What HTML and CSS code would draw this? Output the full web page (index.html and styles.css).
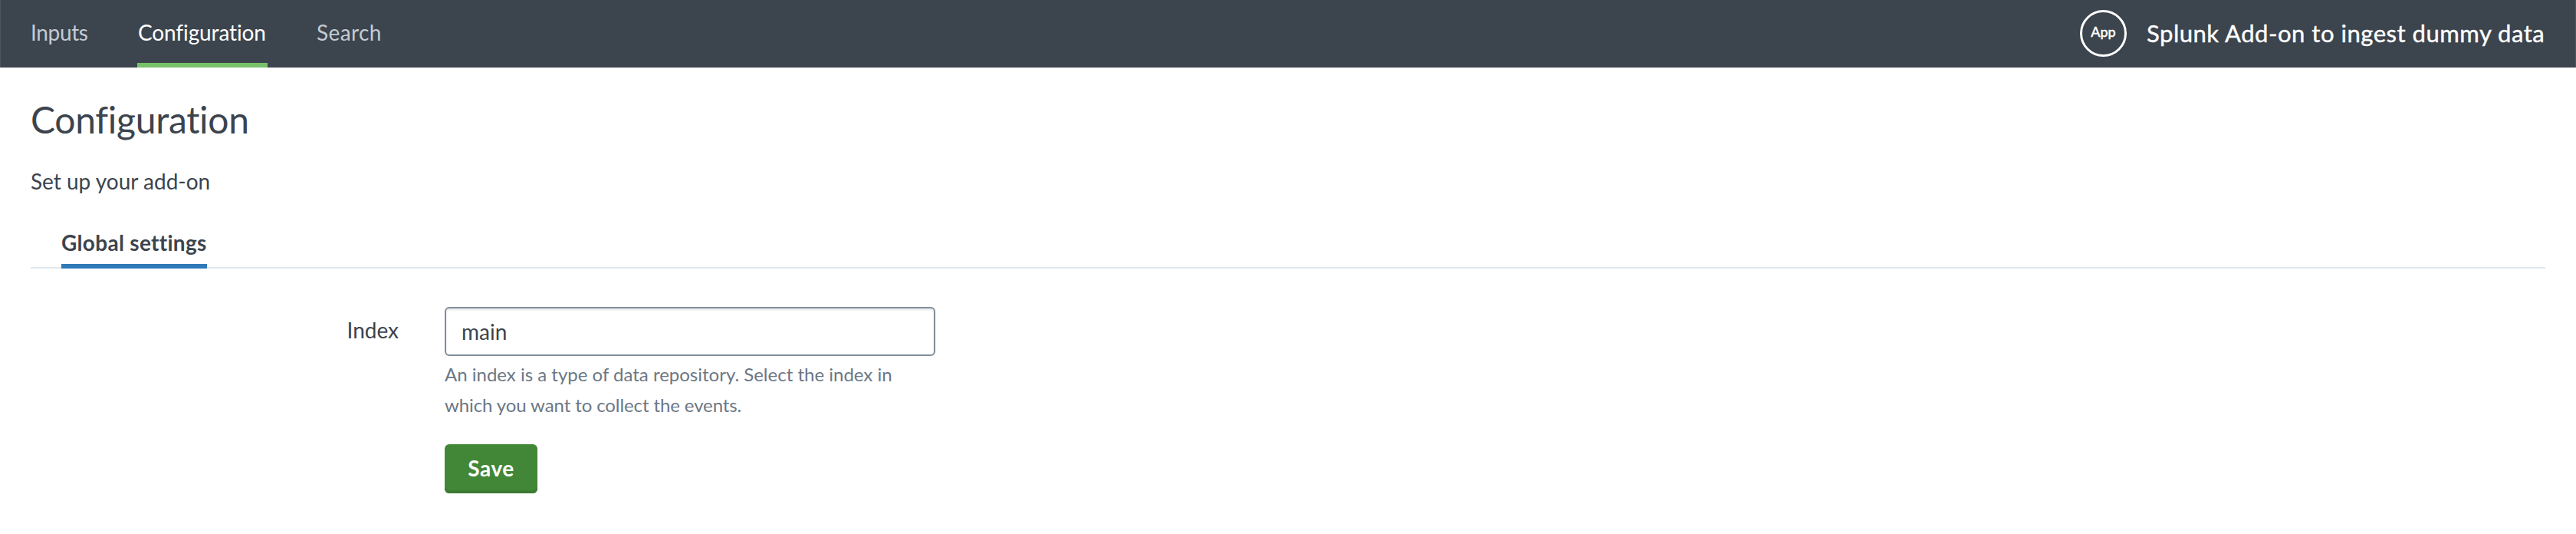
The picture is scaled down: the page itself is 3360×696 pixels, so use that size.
FILE: index.html
```html
<!DOCTYPE html>
<html lang="en">
<head>
<meta charset="utf-8">
<title>Configuration</title>
<link rel="stylesheet" href="styles.css">
</head>
<body>
<header class="app-bar">
  <nav class="nav">
    <a class="nav-item"><span class="t-inputs">Inputs</span></a>
    <a class="nav-item nav-active"><span class="t-config">Configuration</span></a>
    <a class="nav-item"><span class="t-search">Search</span></a>
  </nav>
  <div class="brand">
    <div class="app-icon"><span>App</span></div>
    <span class="app-name">Splunk Add-on to ingest dummy data</span>
  </div>
</header>
<main class="page">
  <h1 class="title">Configuration</h1>
  <p class="subtitle">Set up your add-on</p>
  <div class="tabs"><a class="tab"><span>Global settings</span></a></div>
  <form class="form">
    <label class="label" for="index">Index</label>
    <div class="control">
      <input class="field" id="index" type="text" value="main">
      <p class="help"><span class="help-first">An index is a type of data repository. Select the index in</span><br><span class="help-second">which you want to collect the events.</span></p>
      <button class="save" type="button">Save</button>
    </div>
  </form>
</main>
</body>
</html>
```
FILE: styles.css
```css
* { box-sizing: border-box; }
body {
  margin: 0;
  background: #fff;
  color: #3c444d;
  font: 28px/40px Lato, "Open Sans", sans-serif;
  font-kerning: normal;
  font-variant-ligatures: none;
}
.app-bar {
  display: flex;
  justify-content: space-between;
  height: 88px;
  padding: 0 40px 0 39px;
  background: #3c444d;
  border-left: 1px solid #4d555e;
  border-right: 1px solid #4d555e;
}
.nav { display: flex; }
.nav-item {
  height: 88px;
  padding-top: 22px;
  color: #c3cbd4;
  white-space: nowrap;
}
.nav-item:first-child { width: 139px; }
.nav-active {
  width: 170px;
  margin-right: 64px;
  padding-left: 1px;
  border-bottom: 6px solid #77c16a;
  color: #fff;
}
.t-inputs { letter-spacing: -0.35px; }
.t-config { letter-spacing: -0.12px; }
.t-search { letter-spacing: 0.4px; }
.brand { display: flex; align-items: center; height: 86px; }
.app-icon {
  display: flex;
  align-items: center;
  justify-content: center;
  width: 61px;
  height: 61px;
  margin-right: 26px;
  border: 3px solid #fff;
  border-radius: 50%;
  color: #fff;
  font-size: 18px;
  line-height: 24px;
  -webkit-text-stroke: 0.5px #fff;
}
.app-icon span { padding-bottom: 5px; }
.app-name {
  width: 519px;
  color: #fff;
  font-size: 31px;
  letter-spacing: 0.52px;
  white-space: nowrap;
  -webkit-text-stroke: 0.4px #fff;
}
.page { padding: 0 40px; }
.title { margin: 38px 0 0; font-size: 48px; line-height: 60px; font-weight: 400; letter-spacing: -0.3px; }
.subtitle { margin: 30px 0 0; }
.tabs {
  display: flex;
  height: 64px;
  margin-top: 30px;
  padding-left: 40px;
  box-shadow: inset 0 -2px #e1e6eb;
}
.tab {
  width: 190px;
  height: 64px;
  padding-top: 10px;
  border-bottom: 6px solid #2f7ab8;
  font-weight: 700;
  letter-spacing: 0.3px;
  white-space: nowrap;
}
.form { display: flex; padding-top: 50px; }
.label { width: 480px; margin-right: 60px; padding-top: 10px; text-align: right; }
.control { width: 640px; }
.field {
  display: block;
  width: 640px;
  height: 64px;
  padding: 0 20px;
  border: 2px solid #818d99;
  border-radius: 6px;
  box-shadow: inset 0 2px 3px #e1e6eb;
  background: #fff;
  color: #3c444d;
  font: inherit;
}
.help { margin: 4px 0 0; color: #6b7785; font-size: 24px; white-space: nowrap; }
.help-second { letter-spacing: -0.1px; }
.save {
  display: block;
  width: 121px;
  height: 64px;
  margin-top: 31px;
  padding: 0 0 2px;
  border: 0;
  border-radius: 6px;
  box-shadow: inset 0 -4px #3b7a32;
  background: #428737;
  color: #fff;
  font: inherit;
  font-weight: 700;
  letter-spacing: 0.5px;
}
```
